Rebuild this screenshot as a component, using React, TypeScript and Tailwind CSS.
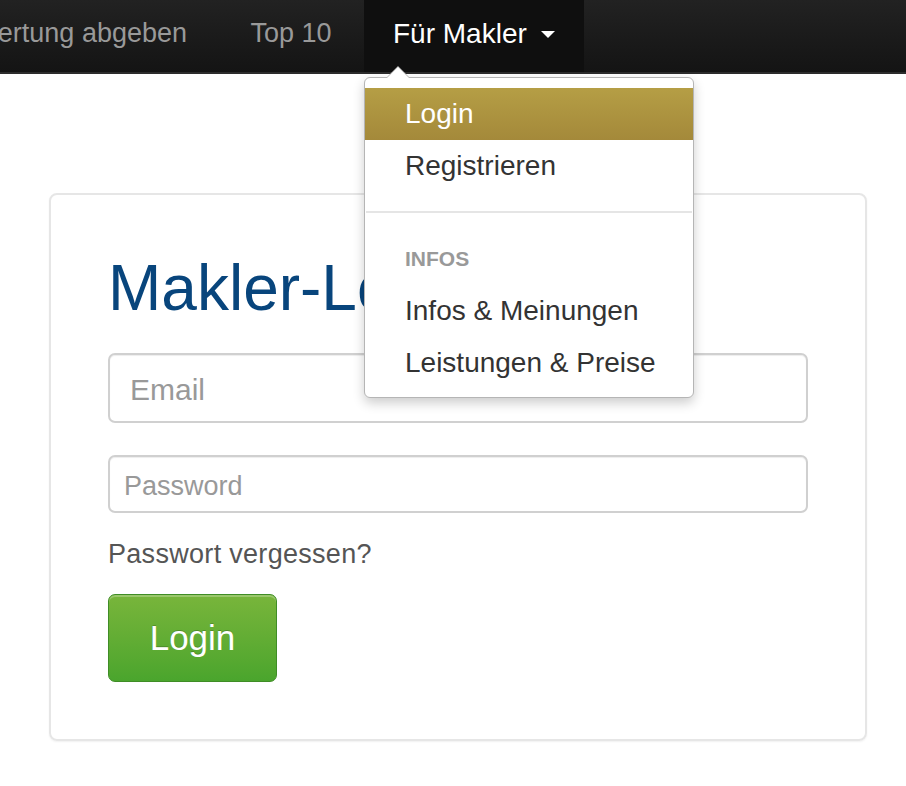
import { useState } from 'react'

const font = { fontFamily: '"Liberation Sans", Arial, Helvetica, sans-serif' }

function DropdownMenu() {
  return (
    <div className="absolute left-0 top-[77px] w-[330px] bg-white border border-[#b5b5b5] rounded-[6px] shadow-[0_5px_12px_rgba(0,0,0,0.2)] pt-[10px] pb-[8px] z-10">
      {/* arrow */}
      <div className="absolute left-[21px] top-[-12px] w-0 h-0 border-x-[12px] border-x-transparent border-b-[12px] border-b-[#b5b5b5]" />
      <div className="absolute left-[22px] top-[-11px] w-0 h-0 border-x-[11px] border-x-transparent border-b-[11px] border-b-white" />

      <a href="#" className="flex items-center h-[52px] pl-[40px] text-[28px] text-white bg-gradient-to-b from-[#b59e45] to-[#a4893a]">
        Login
      </a>
      <a href="#" className="flex items-center h-[52px] pl-[40px] text-[28px] text-[#333]">
        Registrieren
      </a>
      <div className="mt-[19px] mx-px h-[2px] bg-[#e5e5e5]" />
      <div className="pt-[33px] pb-[13px] pl-[40px] text-[21px] leading-[26px] font-bold text-[#999]">
        INFOS
      </div>
      <a href="#" className="flex items-center h-[52px] pl-[40px] text-[28px] text-[#333]">
        Infos &amp; Meinungen
      </a>
      <a href="#" className="flex items-center h-[52px] pl-[40px] text-[28px] text-[#333]">
        Leistungen &amp; Preise
      </a>
    </div>
  )
}

export default function App() {
  const [email, setEmail] = useState('')
  const [password, setPassword] = useState('')

  return (
    <div className="min-h-[786px] bg-white overflow-hidden" style={font}>
      {/* ── Navbar ── */}
      <nav className="h-[74px] bg-gradient-to-b from-[#222] to-[#141414] border-b-2 border-[#2c2c2c] flex">
        <div className="w-[218px] h-[72px] pb-[5px] flex items-center justify-end pr-[31px] overflow-hidden whitespace-nowrap text-[27px] text-[#999]">
          Bewertung abgeben
        </div>
        <a href="#" className="w-[146px] h-[72px] pb-[5px] flex items-center justify-center text-[27px] text-[#999] whitespace-nowrap">
          Top 10
        </a>
        <div className="relative w-[220px] h-[72px] bg-[#0f0f0f]">
          <a href="#" className="h-full pb-[5px] flex items-center pl-[29px] gap-[14px] text-[28px] text-white whitespace-nowrap">
            Für Makler
            <span className="w-0 h-0 mt-[2px] border-x-[7px] border-x-transparent border-t-[7px] border-t-white" />
          </a>
          <DropdownMenu />
        </div>
      </nav>

      {/* ── Login card ── */}
      <div className="pt-[119px] pl-[49px] pb-[44px]">
        <div className="w-[818px] border-2 border-[#e6e6e6] rounded-[8px] shadow-[0_1px_2px_rgba(0,0,0,0.06)] px-[57px] pt-[58px] pb-[57px]">
          <h1 className="text-[64px] leading-[70px] text-[#08457c] whitespace-nowrap">Makler-Login</h1>

          <input
            type="email"
            value={email}
            onChange={e => setEmail(e.target.value)}
            placeholder="Email"
            className="mt-[30px] block w-[700px] h-[70px] px-[20px] pt-[4px] text-[30px] text-[#555] placeholder:text-[#999] border-2 border-[#d0d0d0] rounded-[7px] shadow-[inset_0_1px_1px_rgba(0,0,0,0.075)] outline-none"
          />
          <input
            type="password"
            value={password}
            onChange={e => setPassword(e.target.value)}
            placeholder="Password"
            className="mt-[32px] block w-[700px] h-[58px] px-[14px] pt-[4px] text-[27px] text-[#555] placeholder:text-[#999] border-2 border-[#d0d0d0] rounded-[7px] shadow-[inset_0_1px_1px_rgba(0,0,0,0.075)] outline-none"
          />

          <a href="#" className="mt-[26px] block text-[27px] leading-[30px] text-[#555] tracking-[0.3px]">
            Passwort vergessen?
          </a>

          <button className="mt-[25px] w-[169px] h-[88px] rounded-[7px] border border-[#3f8d26] bg-gradient-to-b from-[#78b53b] to-[#4aa52d] shadow-[inset_0_2px_0_rgba(255,255,255,0.25)] text-white text-[35px] [text-shadow:0_-1px_0_rgba(0,0,0,0.2)]">
            Login
          </button>
        </div>
      </div>
    </div>
  )
}
